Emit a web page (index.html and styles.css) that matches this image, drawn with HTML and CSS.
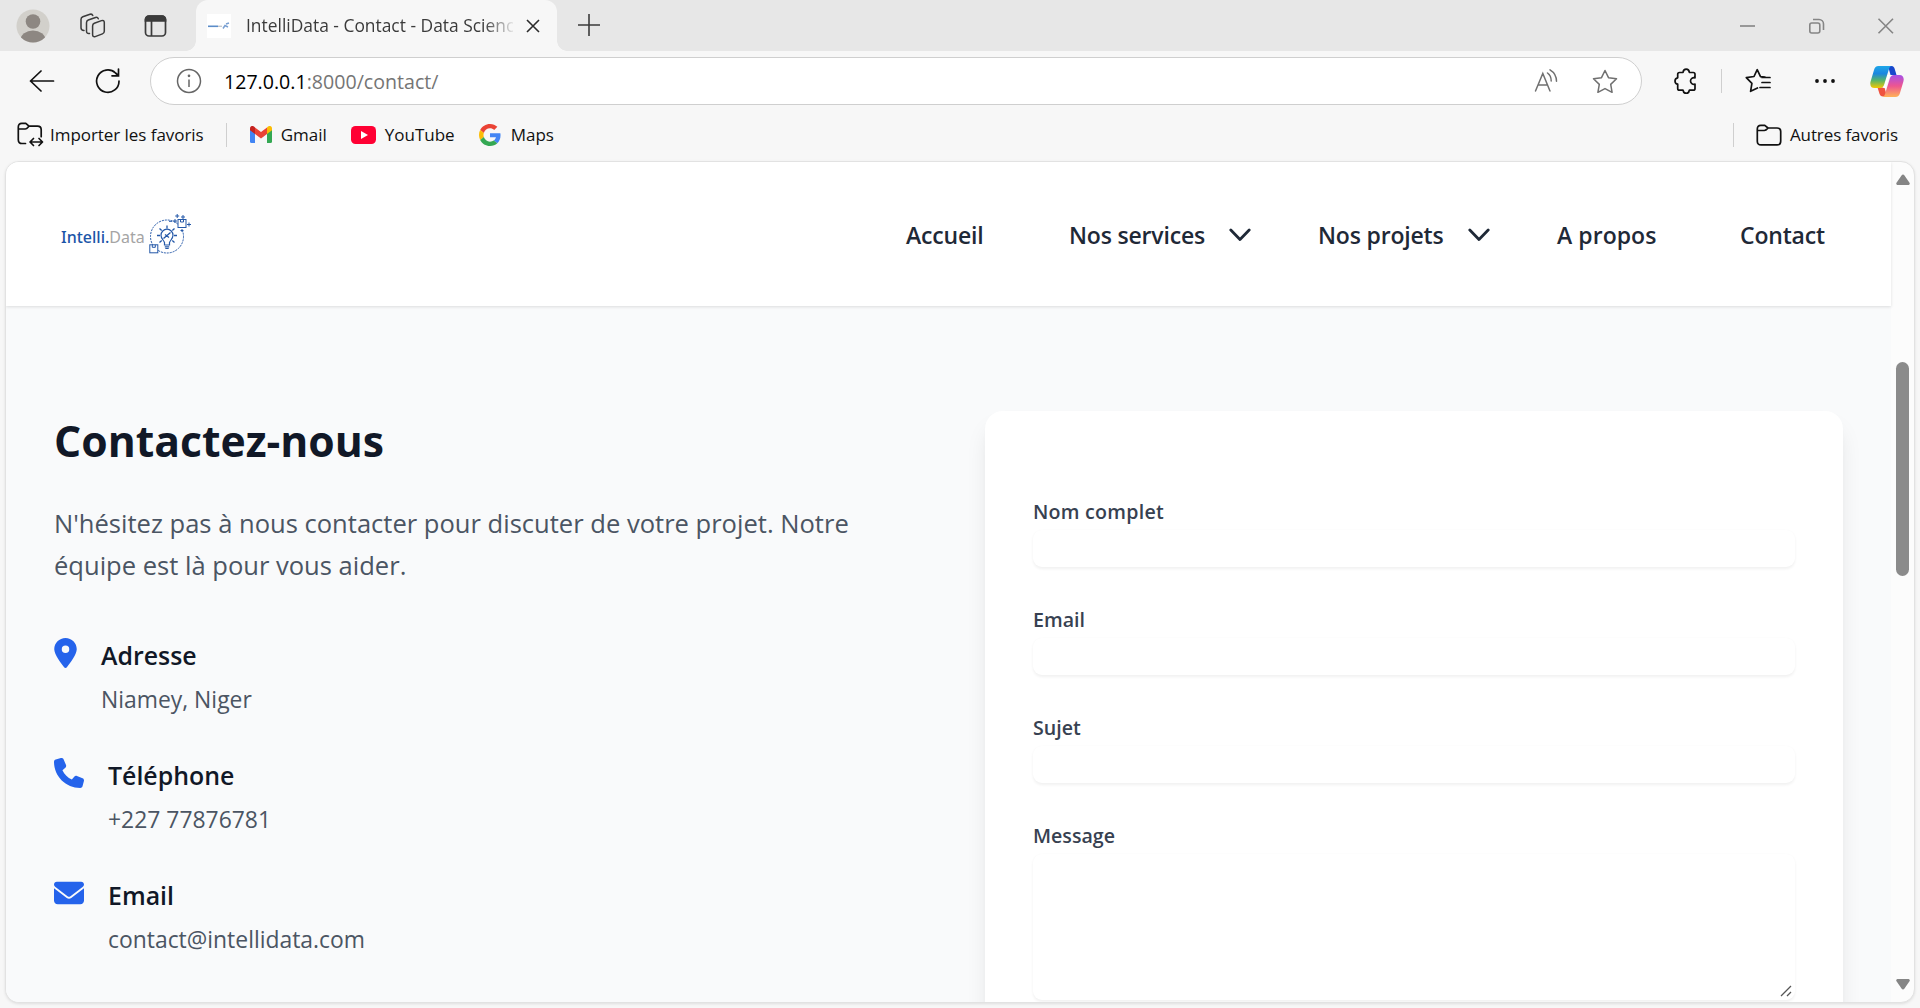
FILE: index.html
```html
<!DOCTYPE html>
<html lang="fr">
<head>
<meta charset="utf-8">
<title>IntelliData - Contact - Data Science</title>
<link rel="stylesheet" href="styles.css">
</head>
<body>
<div class="tabstrip">
  <svg class="avatar" width="34" height="36" viewBox="0 0 34 36"><defs><clipPath id="av"><circle cx="17" cy="18" r="16.5"/></clipPath></defs><circle cx="17" cy="18" r="16.5" fill="#d2d0cb"/><g clip-path="url(#av)" fill="#8d8782"><circle cx="17" cy="13.500" r="7.300"/><ellipse cx="17" cy="32" rx="12.500" ry="9.500"/></g></svg>
  <svg class="stack" width="26" height="26" viewBox="0 0 26 26" fill="none" stroke="#3b3b3b" stroke-width="1.500" stroke-linejoin="round" stroke-linecap="round"><path d="M14.300 10.200l7.200-2.600c1.600-.5 2.800.2 2.800 1.900v8.700c0 1.300-.6 2.200-1.900 2.700l-7.200 2.700c-1.500.5-2.600-.2-2.600-1.900v-8.700c0-1.400.5-2.300 1.700-2.800z"/><path d="M9.500 20.500C7.300 20.800 6.500 19.800 6.500 18V9.800c0-1.400.5-2.300 1.800-2.800l7.200-2.500c1.300-.4 2.300 0 2.800 1.200"/><path d="M4 17.500C2 17.500 1 16.500 1 14.800V6.600c0-1.400.5-2.300 1.800-2.800L10 1.300c1.300-.4 2.300 0 2.800 1.200"/></svg>
  <svg class="panel" width="24" height="24" viewBox="0 0 24 24" fill="none" stroke="#3b3b3b" stroke-width="1.700"><rect x="1.500" y="2" width="20" height="20" rx="3.500"/><path d="M1.500 5.500a3.500 3.500 0 0 1 3.500-3.500h13a3.500 3.500 0 0 1 3.500 3.500V7h-20z" fill="#3b3b3b"/><path d="M7.500 7v15"/></svg>
  <div class="tab">
    <svg class="fav" width="24" height="24" viewBox="0 0 24 24"><path fill="#fff" d="M0 0h24v24H0z"/><path d="M1 12.300h10" stroke="#5b8cc8" stroke-width="1.600"/><path d="M11 12.300h4" stroke="#c5c8cc" stroke-width="1.400"/><path d="M16 14.500l2-3 3 1.500M19 10l3-1" stroke="#7aa0d2" stroke-width="1.500" fill="none"/></svg>
    <span class="tab-title">IntelliData - Contact - Data Science</span>
    <svg class="tab-x" width="14" height="14" viewBox="0 0 14 14" stroke="#2b2b2b" stroke-width="1.600"><path d="M1 1l12 12M13 1L1 13"/></svg>
  </div>
  <svg class="plus" width="22" height="22" viewBox="0 0 22 22" stroke="#3b3b3b" stroke-width="1.600"><path d="M11 0v22M0 11h22"/></svg>
  <svg class="winctl" width="156" height="16" viewBox="0 0 156 16" fill="none" stroke="#858585" stroke-width="1.600"><path d="M0 8h15"/><rect x="69.800" y="5" width="10" height="10" rx="2"/><path d="M73 1.500h6a4.500 4.500 0 0 1 4.500 4.500v6"/><path d="M138.500.8l14.500 14.500M153 .8l-14.500 14.500"/></svg>
</div>
<div class="toolbar">
  <svg class="back" width="26" height="22" viewBox="0 0 26 22" fill="none" stroke="#111" stroke-width="1.700" stroke-linecap="round" stroke-linejoin="round"><path d="M24.500 11H1.500M12 1L1.500 11 12 21"/></svg>
  <svg class="reload" width="26" height="26" viewBox="0 0 26 26" fill="none" stroke="#111" stroke-width="1.700" stroke-linecap="round"><path d="M24 13A11.200 11.200 0 1 1 20.500 5l2.800 2.500M23.500 1v6.800H17"/></svg>
  <div class="address">
    <svg class="info" width="26" height="26" viewBox="0 0 26 26" fill="none" stroke="#666" stroke-width="1.500"><circle cx="13" cy="13" r="11.500"/><path d="M13 11.500v7.500"/><circle cx="13" cy="7.800" r=".6" fill="#666"/></svg>
    <span class="url"><b>127.0.0.1</b>:8000/contact/</span>
    <svg class="read" width="26" height="24" viewBox="0 0 26 24" fill="none" stroke="#707070" stroke-width="1.500" stroke-linecap="round"><path d="M1.500 22L8.800 4.500 16 22M4 16h9.600M13.500 4c2.500 1.800 3.700 4.500 3.700 8M16 .8c4.500 2.700 6.500 6.500 6.500 11.500"/></svg>
    <svg class="star" width="26" height="25" viewBox="0 0 26 25" fill="none" stroke="#707070" stroke-width="1.500" stroke-linejoin="round"><path d="M13 1.500l3.500 7.200 8 1.100-5.800 5.600 1.400 7.900L13 19.600l-7.100 3.700 1.400-7.900L1.500 9.800l8-1.100z"/></svg>
  </div>
  <svg class="puzzle" width="24" height="26" viewBox="0 0 24 26" fill="none" stroke="#111" stroke-width="1.700" stroke-linejoin="round"><path d="M5.500 4.500H9c.3-2.400 1.500-3.300 3.200-3.300s2.900.9 3.200 3.300h3.800c1.200 0 1.800.6 1.800 1.800v3.500c-2.500-.5-4.500 1-4.500 3.200s2 3.700 4.500 3.200v4.200c0 1.200-.6 1.800-1.800 1.800h-3.800c-.3 2.200-1.500 3.200-3.200 3.200S9.300 24.400 9 22.200H5.500c-1.200 0-1.800-.6-1.800-1.800v-4.200C2 16 1 14.900 1 13s1-3 2.700-3.200V6.300c0-1.200.6-1.800 1.800-1.800z"/></svg>
  <span class="sep"></span>
  <svg class="favs" width="26" height="26" viewBox="0 0 26 26" fill="none" stroke="#111" stroke-width="1.700" stroke-linejoin="round" stroke-linecap="round"><path d="M20 9.200l-4.500-.5L12.200 1.700 9 8.500l-7.700 1.200 5.600 5.600-1.300 8L12.500 20M17 9.500h8M17 14.500h8M15 19.500h10"/></svg>
  <svg class="dots" width="22" height="6" viewBox="0 0 22 6" fill="#111"><circle cx="3" cy="3" r="1.900"/><circle cx="11" cy="3" r="1.900"/><circle cx="19" cy="3" r="1.900"/></svg>
  <svg class="copilot" width="34" height="31" viewBox="0 0 34 31"><defs><linearGradient id="ca" x1="0" y1="0" x2="0" y2="1"><stop offset="0" stop-color="#1fa7e8"/><stop offset=".35" stop-color="#1a86e0"/><stop offset=".65" stop-color="#55b46a"/><stop offset="1" stop-color="#f5c800"/></linearGradient><linearGradient id="cb" x1="0" y1="0" x2="0" y2="1"><stop offset="0" stop-color="#a650e8"/><stop offset=".5" stop-color="#ee5590"/><stop offset="1" stop-color="#ffb357"/></linearGradient></defs><path d="M18 0h3.500c2 0 2.800 1.500 3.300 3.200L26.500 9h-6z" fill="#1747cc"/><path d="M7.500 21.500h7L17 30.500h-4c-2 0-3-1.300-3.600-3z" fill="#ef5340"/><path d="M8.500 0H22c-2 0-2.600 1.600-3.200 3.500l-4.600 15c-.7 2.300-2 3.500-4.200 3.500H4.500C1 22-.4 19 .6 15.500L4 4C4.800 1.500 6 0 8.500 0z" fill="url(#ca)"/><path d="M25.500 31H12c2 0 2.600-1.600 3.200-3.500l4.600-15C20.500 10.200 21.800 9 24 9h5.500c3.500 0 4.900 3 3.900 6.500L30 27c-.8 2.500-2 4-4.500 4z" fill="url(#cb)"/><path d="M17.700 9H21c-1.200.6-1.700 1.700-2.200 3.200L15.800 22h-3.300c1-.6 1.600-1.600 2.100-3.200z" fill="#fff"/></svg>
</div>
<div class="bookmarks">
  <svg class="bm-import" width="27" height="25" viewBox="0 0 27 25" fill="none" stroke="#111" stroke-width="1.700" stroke-linejoin="round" stroke-linecap="round"><path d="M8.500 21.500H5c-2.400 0-3.700-1.300-3.700-3.700V5c0-2.400 1.200-3.700 3.500-3.700h4L12 4.200h8.500c2.300 0 3.700 1.200 3.700 3.500v7M1.500 7h6.800c1.700 0 2.500-1.500 3.700-2.800M14 20h10.500M16.500 16.500L13 20l3.500 3.500M22 16.500l3.500 3.500-3.500 3.500"/></svg>
  <span class="bm bm-first">Importer les favoris</span>
  <span class="sep"></span>
  <svg class="gmail" width="22" height="17" viewBox="0 0 22 17"><path fill="#4285f4" d="M0 3h5v14H1.500A1.500 1.500 0 0 1 0 15.500z"/><path fill="#34a853" d="M17 3h5v12.500a1.500 1.500 0 0 1-1.500 1.500H17z"/><path fill="#ea4335" d="M5 1.500l6 4.600 6-4.600V8l-6 4.600L5 8z"/><path fill="#c5221f" d="M0 2.400C0 .2 2.400-.8 4 .6l1 .9V8L0 4.300z"/><path fill="#fbbc04" d="M22 2.400c0-2.200-2.400-3.200-4-1.800l-1 .9V8l5-3.700z"/></svg>
  <span class="bm">Gmail</span>
  <svg class="yt" width="25" height="18" viewBox="0 0 25 18"><rect width="25" height="18" rx="4.500" fill="#ff0033"/><path d="M10 5l7 4-7 4z" fill="#fff"/></svg>
  <span class="bm">YouTube</span>
  <svg class="goog" width="22" height="22" viewBox="0 0 48 48"><path fill="#ea4335" d="M24 9.500c3.540 0 6.710 1.220 9.210 3.600l6.850-6.850C35.900 2.380 30.470 0 24 0 14.620 0 6.510 5.380 2.560 13.220l7.980 6.190C12.430 13.720 17.740 9.500 24 9.500z"/><path fill="#4285f4" d="M46.980 24.550c0-1.570-.15-3.090-.38-4.550H24v9.020h12.940c-.58 2.960-2.260 5.480-4.780 7.180l7.730 6c4.510-4.180 7.090-10.360 7.090-17.650z"/><path fill="#fbbc05" d="M10.530 28.590c-.48-1.450-.76-2.990-.76-4.590s.27-3.140.76-4.590l-7.980-6.190C.92 16.460 0 20.120 0 24s.92 7.540 2.560 10.780l7.970-6.190z"/><path fill="#34a853" d="M24 48c6.480 0 11.930-2.130 15.890-5.810l-7.730-6c-2.150 1.450-4.920 2.300-8.160 2.300-6.260 0-11.570-4.220-13.470-9.910l-7.980 6.190C6.510 42.620 14.620 48 24 48z"/></svg>
  <span class="bm">Maps</span>
  <span class="sep last"></span>
  <svg class="folder" width="26" height="22" viewBox="0 0 26 22" fill="none" stroke="#111" stroke-width="1.700" stroke-linejoin="round"><path d="M1.300 5c0-2.400 1.200-3.700 3.500-3.700h4L12 4h9c2.400 0 3.700 1.200 3.700 3.500v9.700c0 2.400-1.300 3.700-3.700 3.700H5c-2.400 0-3.700-1.300-3.700-3.700zM1.500 6.500h6.800C10 6.500 11 5.200 12 4"/></svg>
  <span class="bm">Autres favoris</span>
</div>
<div class="frame">
  <div class="page">
    <header class="header">
      <div class="brand">
        <span class="brand-name"><b>Intelli.</b>Data</span>
        <svg class="brand-mark" width="42" height="42" viewBox="0 0 42 42" fill="none" stroke="#2458a8" stroke-width="1"><circle cx="18" cy="23.500" r="16.500" stroke-dasharray="2 1"/><path d="M27 1h16v16H30z" fill="#fff" stroke="none"/><rect x="29" y="6.500" width="8" height="8" fill="#fff"/><path d="M31.500 6.500v2.500h3V6.500"/><rect x=".8" y="31.800" width="8" height="8" fill="#fff"/><path d="M3.300 31.800v2.500h3v-2.500M28.200 1v4M26.200 3h4M34 2v4M32 4h4M40 9.500v4M38 11.500h4M26 6v4M24 8h4M20 8.300h3M33 16v3M31.500 17.500h3"/><path d="M15.500 32v-2.500c-1-2.500-3.500-4-3.500-7.300a6 6 0 0 1 12 0c0 3.300-2.500 4.800-3.500 7.300V32zM15.800 33.800h4.400M16.300 35.500h3.400" stroke-width="1.200"/><path d="M14.500 25.500l7-6M16 21.500l4 3M18 12.500v3M10.500 15.500l2.200 2M25.500 15.500l-2.200 2M8 22.500h3M25 22.500h3M10.500 29.500l2.200-2M25.500 29.500l-2.200-2" stroke-width="1.300"/></svg>
      </div>
      <nav class="nav">
        <span>Accueil</span>
        <span>Nos services</span>
        <svg width="22" height="14" viewBox="0 0 22 14" fill="none" stroke="#1f2937" stroke-width="2.800" stroke-linecap="round" stroke-linejoin="round"><path d="M1.800 2l9.200 9.500L20.200 2"/></svg>
        <span>Nos projets</span>
        <svg width="22" height="14" viewBox="0 0 22 14" fill="none" stroke="#1f2937" stroke-width="2.800" stroke-linecap="round" stroke-linejoin="round"><path d="M1.800 2l9.200 9.500L20.200 2"/></svg>
        <span class="plain">A propos</span>
        <span>Contact</span>
      </nav>
    </header>
    <main class="main">
      <section class="info-col">
        <h1>Contactez-nous</h1>
        <p class="lead">N'hésitez pas à nous contacter pour discuter de votre projet. Notre<br>équipe est là pour vous aider.</p>
        <div class="item">
          <svg width="23" height="30" viewBox="0 0 384 512" fill="#2563eb"><path d="M215.700 499.200C267 435 384 279.400 384 192 384 86 298 0 192 0S0 86 0 192c0 87.400 117 243 168.300 307.200 12.300 15.300 35.100 15.300 47.400 0zM192 128a64 64 0 1 1 0 128 64 64 0 1 1 0-128z"/></svg>
          <div><h3>Adresse</h3><p>Niamey, Niger</p></div>
        </div>
        <div class="item">
          <svg width="30" height="30" viewBox="0 0 512 512" fill="#2563eb"><path d="M164.900 24.600c-7.700-18.600-28-28.500-47.400-23.200l-88 24C12.100 30.200 0 46 0 64c0 247.400 200.600 448 448 448 18 0 33.800-12.100 38.600-29.500l24-88c5.300-19.400-4.600-39.700-23.200-47.400l-96-40c-16.300-6.800-35.200-2.100-46.300 11.600L304.700 368C234.300 334.700 177.300 277.700 144 207.300l49.300-40.300c13.700-11.200 18.400-30 11.600-46.300l-40-96z"/></svg>
          <div><h3>Téléphone</h3><p>+227 77876781</p></div>
        </div>
        <div class="item">
          <svg width="30" height="30" viewBox="0 0 512 512" fill="#2563eb"><path d="M48 64C21.500 64 0 85.500 0 112c0 15.100 7.100 29.300 19.200 38.400l217.600 163.200c11.400 8.500 27 8.500 38.400 0l217.600-163.200c12.100-9.100 19.200-23.300 19.200-38.400 0-26.500-21.500-48-48-48H48zM0 176v208c0 35.300 28.700 64 64 64h384c35.300 0 64-28.700 64-64V176L294.400 339.200c-22.800 17.100-54 17.100-76.800 0L0 176z"/></svg>
          <div><h3>Email</h3><p>contact@intellidata.com</p></div>
        </div>
      </section>
      <form class="card">
        <label class="wide">Nom complet</label><div class="field"></div>
        <label>Email</label><div class="field"></div>
        <label>Sujet</label><div class="field"></div>
        <label>Message</label>
        <div class="field area"><svg width="12" height="12" viewBox="0 0 12 12" stroke="#555" stroke-width="1.300"><path d="M1 11L11 1M7 11l4-4"/></svg></div>
      </form>
    </main>
  </div>
  <div class="scroll">
    <svg width="14" height="11" viewBox="0 0 14 11" fill="#858585"><path d="M5.700 1.200a1.500 1.500 0 0 1 2.600 0l5.200 7.600a1.400 1.400 0 0 1-1.300 2.200H1.800A1.400 1.400 0 0 1 .5 8.800z"/></svg>
    <div class="thumb"></div>
    <svg width="14" height="11" viewBox="0 0 14 11" fill="#858585"><path d="M5.700 9.800a1.500 1.500 0 0 0 2.600 0l5.200-7.600A1.400 1.400 0 0 0 12.200 0H1.800A1.400 1.400 0 0 0 .5 2.200z"/></svg>
  </div>
</div>
</body>
</html>
```
FILE: styles.css
```css
* { box-sizing: border-box; }
b { font-weight: inherit; }
body { margin: 0; width: 1920px; height: 1008px; overflow: hidden; background: #f7f7f7; font-family: "Open Sans", "Noto Sans", sans-serif; display: flex; flex-direction: column; }
svg { display: block; flex: none; }
span { white-space: nowrap; }

.tabstrip { height: 51px; background: #e7e7e7; display: flex; align-items: center; flex: none; padding-left: 16px; }
.stack { margin-left: 30px; }
.panel { margin-left: 38px; }
.tab { position: relative; width: 361px; height: 51px; margin-left: 28px; background: #f7f7f7; border-radius: 12px 12px 0 0; display: flex; align-items: center; padding-left: 11px; }
.tab::before, .tab::after { content: ""; position: absolute; bottom: 0; width: 10px; height: 10px; }
.tab::before { left: -10px; background: radial-gradient(circle at 0 0, #e7e7e7 9.500px, #f7f7f7 10px); }
.tab::after { right: -10px; background: radial-gradient(circle at 100% 0, #e7e7e7 9.500px, #f7f7f7 10px); }
.tab-title { margin-left: 15px; width: 267px; overflow: hidden; font-size: 17.400px; padding-bottom: 1px; color: #3b3b3b; -webkit-mask-image: linear-gradient(90deg, #000 238px, transparent 270px); mask-image: linear-gradient(90deg, #000 238px, transparent 270px); }
.tab-x { margin-left: 13px; }
.plus { margin-left: 21px; margin-bottom: 2px; }
.winctl { margin-left: auto; margin-right: 24px; }

.toolbar { height: 60px; flex: none; display: flex; align-items: center; }
.back { margin-left: 29px; }
.reload { margin-left: 40px; }
.address { margin-left: 29px; width: 1492px; height: 48px; border: 1px solid #cfcfcf; border-radius: 24px; background: #fff; display: flex; align-items: center; padding-left: 25px; }
.url { margin-left: 22px; font-size: 19.600px; color: #757575; }
.url b { color: #000; }
.read { margin-left: auto; }
.star { margin-left: 32px; margin-right: 23px; }
.puzzle { margin-left: 32px; }
.sep { width: 1px; height: 24px; background: #cfcfcf; flex: none; }
.toolbar .sep { margin-left: 23px; }
.favs { margin-left: 23px; }
.dots { margin-left: 43px; }
.copilot { margin-left: 34px; }

.bookmarks { height: 50px; flex: none; display: flex; align-items: center; padding: 0 22px 3px 17px; font-size: 17px; color: #111; }
.bm { margin-left: 9px; }
.bm-first { margin-left: 6px; letter-spacing: -.05px; }
.bookmarks .sep { margin-left: 22px; }
.gmail { margin-left: 23px; }
.yt { margin-left: 24px; }
.goog { margin-left: 24px; }
.goog + .bm { margin-left: 10px; }
.bookmarks .last { margin-left: auto; }
.folder { margin-left: 22px; }
.folder + .bm { margin-left: 8px; letter-spacing: -.1px; }

.frame { flex: none; width: 1910px; height: 842px; margin-left: 5px; border: 1px solid #e2e2e2; border-radius: 14px; overflow: hidden; display: flex; background: #fcfcfc; box-shadow: 0 1px 3px rgba(0,0,0,.1); }
.page { width: 1885px; background: #f9fafb; }
.header { height: 144px; background: #fff; display: flex; align-items: center; box-shadow: 0 1px 3px rgba(0,0,0,.12); }
.brand { display: flex; align-items: center; margin-left: 55px; }
.brand-name { width: 85px; padding-top: 6px; font-family: "Noto Sans", sans-serif; font-size: 16px; color: #a5a5a5; }
.brand-name b { color: #1b55a8; font-weight: 500; }
.brand-mark { margin-left: 3px; }
.nav { margin-left: 715px; padding-top: 2px; display: grid; grid-template-columns: 163px 160px 89px 150px 89px 183px 90px; align-items: center; font-size: 23px; font-weight: 600; letter-spacing: -.18px; color: #1f2937; }
.nav .plain { letter-spacing: .05px; }

.main { display: flex; padding: 105px 0 0 48px; }
.info-col { width: 931px; }
h1, h3, p { margin: 0; }
h1 { font-size: 42.700px; line-height: 60px; font-weight: 700; color: #111827; }
.lead { margin-top: 31px; font-size: 25.560px; line-height: 42px; color: #4b5563; }
.item { display: flex; gap: 24px; height: 120px; }
.item > svg { margin-top: 4px; }
.lead + .item { margin-top: 48px; }
.item h3 { font-size: 24.900px; line-height: 42px; font-weight: 600; color: #111827; }
.item p { font-size: 22.900px; line-height: 36px; margin-top: 6px; color: #4b5563; }
.card { width: 858px; height: 700px; background: #fff; border-radius: 18px; padding: 84px 48px; box-shadow: 0 15px 23px -4px rgba(0,0,0,.1), 0 6px 9px -6px rgba(0,0,0,.1); }
label { display: block; height: 35px; line-height: 33px; font-size: 19.600px; font-weight: 600; color: #374151; }
.wide { letter-spacing: .25px; }
.field { height: 37px; width: 762px; margin-bottom: 36px; border-radius: 9px; background: #fff; box-shadow: 0 1.500px 3px rgba(0,0,0,.06); }
.area { height: 146px; display: flex; justify-content: flex-end; align-items: flex-end; padding: 3px; }

.scroll { width: 22px; padding: 12px 0 0 5px; }
.thumb { width: 13px; height: 214px; margin: 177px 0 403px; border-radius: 7px; background: #8b8b8b; }
```
